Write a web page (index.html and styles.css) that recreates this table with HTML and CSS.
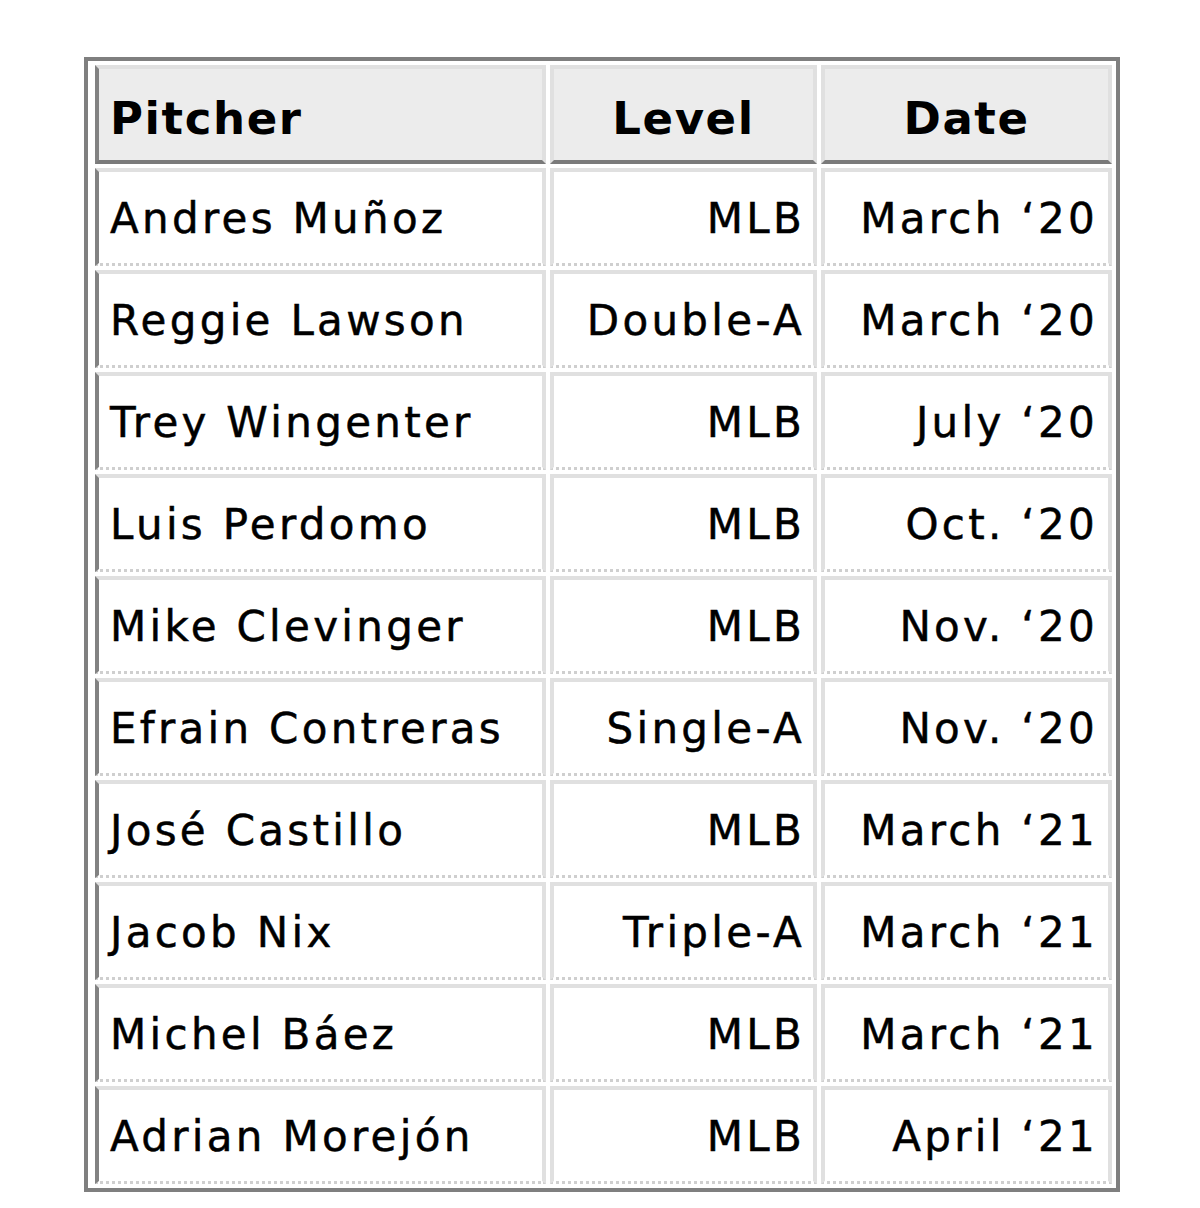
FILE: index.html
```html
<!DOCTYPE html>
<html lang="en">
<head>
<meta charset="utf-8">
<title>Pitchers</title>
<link rel="stylesheet" href="styles.css">
</head>
<body>
<table class="roster">
  <thead>
    <tr>
      <th class="c-name">Pitcher</th>
      <th class="c-level">Level</th>
      <th class="c-date">Date</th>
    </tr>
  </thead>
  <tbody>
    <tr><td class="c-name">Andres Muñoz</td><td class="c-level">MLB</td><td class="c-date">March ‘20</td></tr>
    <tr><td class="c-name">Reggie Lawson</td><td class="c-level">Double-A</td><td class="c-date">March ‘20</td></tr>
    <tr><td class="c-name">Trey Wingenter</td><td class="c-level">MLB</td><td class="c-date">July ‘20</td></tr>
    <tr><td class="c-name">Luis Perdomo</td><td class="c-level">MLB</td><td class="c-date">Oct. ‘20</td></tr>
    <tr><td class="c-name">Mike Clevinger</td><td class="c-level">MLB</td><td class="c-date">Nov. ‘20</td></tr>
    <tr><td class="c-name">Efrain Contreras</td><td class="c-level">Single-A</td><td class="c-date">Nov. ‘20</td></tr>
    <tr><td class="c-name">José Castillo</td><td class="c-level">MLB</td><td class="c-date">March ‘21</td></tr>
    <tr><td class="c-name">Jacob Nix</td><td class="c-level">Triple-A</td><td class="c-date">March ‘21</td></tr>
    <tr><td class="c-name">Michel Báez</td><td class="c-level">MLB</td><td class="c-date">March ‘21</td></tr>
    <tr><td class="c-name">Adrian Morejón</td><td class="c-level">MLB</td><td class="c-date">April ‘21</td></tr>
  </tbody>
</table>
</body>
</html>
```

FILE: styles.css
```css
html, body {
  margin: 0;
  padding: 0;
  background: #ffffff;
}

body {
  font-family: "DejaVu Sans", Verdana, sans-serif;
  color: #000000;
}

.roster {
  margin: 57px 0 0 84px;
  border: 4px solid #7f7f7f;
  border-collapse: separate;
  border-spacing: 4px;
  padding: 0 0 0 3px;
}

.roster th,
.roster td {
  box-sizing: border-box;
  border-top: 4px solid #e0e0e0;
  border-right: 4px solid #e0e0e0;
  border-left: 4px solid #e0e0e0;
  white-space: nowrap;
  vertical-align: top;
}

.roster th {
  background: #ececec;
  border-bottom: 4px solid #7a7a7a;
  font-size: 45px;
  font-weight: bold;
  letter-spacing: 1.6px;
  line-height: 83px;
  padding: 8px 7px 0 7px;
  text-align: center;
}

.roster td {
  background: #ffffff;
  border-bottom: 3px dotted #cfcfcf;
  font-size: 42px;
  font-weight: normal;
  letter-spacing: 3.3px;
  line-height: 89px;
  padding: 2px 8px 0 7px;
  text-align: right;
  -webkit-text-stroke: 0.5px #000000;
}

.roster .c-name {
  width: 451px;
  border-left-color: #828282;
  padding-left: 11px;
  text-align: left;
}

.roster .c-level {
  width: 267px;
}

.roster .c-date {
  width: 291px;
}

.roster td.c-date {
  padding-right: 10px;
}

.roster th.c-level,
.roster th.c-date {
  text-align: center;
}
```
